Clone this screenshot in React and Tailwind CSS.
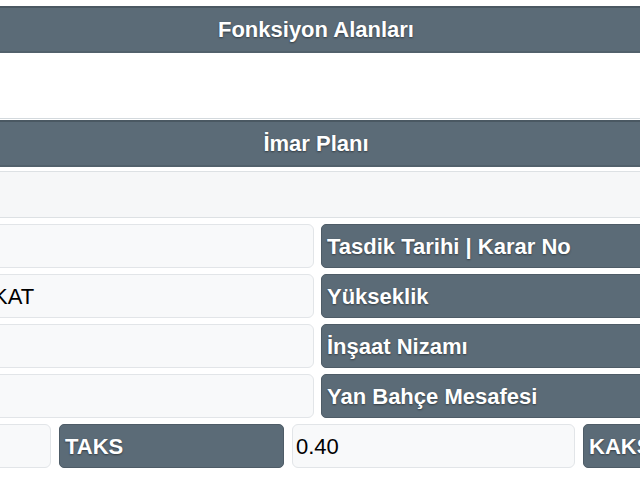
import React from 'react';

const header = "h-[47px] flex items-center justify-center bg-[#5b6b77] border-t-2 border-b-2 border-t-[#4a5862] border-b-[#52616c] text-white font-bold text-[22px] [text-shadow:0_1px_2px_rgba(0,0,0,0.45)]";
const label = "h-[44px] flex items-center px-[5px] rounded-[5px] bg-[#5b6b77] border border-[#4e5c67] text-white font-bold text-[22px] whitespace-nowrap overflow-hidden [text-shadow:0_1px_2px_rgba(0,0,0,0.45)]";
const input = "h-[44px] flex items-center px-[9px] rounded-[6px] bg-[#f8f9fa] border border-[#e2e5e8] text-black text-[22px] whitespace-nowrap overflow-hidden";

function Row({ value, name }) {
  return (
    <div className="flex gap-[7px]">
      <div className={`${input} w-[334px] shrink-0`}>{value}</div>
      <div className={`${label} flex-1`}>{name}</div>
    </div>
  );
}

export default function App() {
  return (
    <div className="w-[640px] h-[480px] overflow-hidden bg-white font-['Liberation_Sans',Arial,sans-serif]">
      <div className="ml-[-20px] w-[672px] pt-[6px]">
        <div className={header}>Fonksiyon Alanları</div>
        <div className="h-[66px] border-b border-[#d3d9dd]" />
        <div className="mt-[1px]">
          <div className={header}>İmar Planı</div>
        </div>
        <div className="mt-[4px] h-[47px] bg-[#f6f7f8] border-t border-b border-[#dde1e4]" />
        <div className="mt-[6px] flex flex-col gap-[6px]">
          <Row value="" name="Tasdik Tarihi | Karar No" />
          <Row value={<span className="ml-[3px]">KAT</span>} name="Yükseklik" />
          <Row value="" name="İnşaat Nizamı" />
          <Row value="" name="Yan Bahçe Mesafesi" />
          <div className="flex gap-[8px]">
            <div className={`${input} w-[71px] shrink-0`} />
            <div className={`${label} w-[225px] shrink-0`}>TAKS</div>
            <div className={`${input} w-[283px] shrink-0 !px-[3px]`}>0.40</div>
            <div className={`${label} flex-1`}>KAKS</div>
          </div>
        </div>
      </div>
    </div>
  );
}
